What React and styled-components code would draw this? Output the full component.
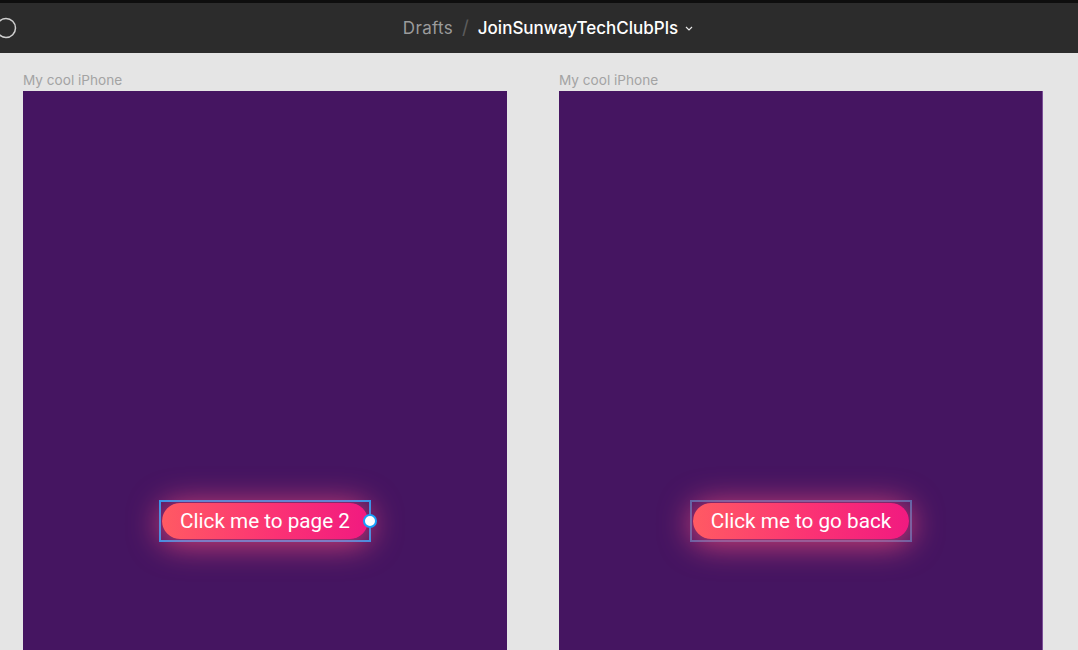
import React from "react";
import styled, { createGlobalStyle } from "styled-components";

const Global = createGlobalStyle`
  html, body { margin: 0; padding: 0; background: #e5e5e5; overflow: hidden; }
  body { font-family: Inter, "Noto Sans", sans-serif; }
  #root { height: 650px; }
`;

const Page = styled.div`
  height: 650px;
  display: flex;
  flex-direction: column;
  overflow: hidden;
`;

const TopStrip = styled.div`
  height: 3px;
  background: #0e0e0e;
  flex: none;
`;

const Toolbar = styled.header`
  height: 50px;
  flex: none;
  background: #2c2c2c;
  display: grid;
  grid-template-columns: 1fr auto 1fr;
  align-items: center;
`;

const ToolLeft = styled.div`
  display: flex;
  align-items: center;
  margin-left: -5px;
`;

const Title = styled.div`
  display: flex;
  align-items: center;
  font-size: 17px;
  padding-left: 18px;
  padding-bottom: 1px;
`;

const Crumb = styled.span`
  color: ${(p) => (p.$active ? "#ffffff" : "#9b9b9b")};
  font-weight: ${(p) => (p.$active ? 500 : 400)};
  letter-spacing: ${(p) => (p.$active ? "0" : "0.3px")};
`;

const Slash = styled.span`
  color: #5c5c5c;
  margin: 0 9px 0 9px;
  font-size: 19px;
`;

const Chevron = styled.svg`
  margin-left: 7px;
  margin-top: 2px;
`;

const Canvas = styled.main`
  flex: 1;
  display: flex;
  gap: 52px;
  padding: 19px 0 0 23px;
  overflow: hidden;
`;

const FrameColumn = styled.section`
  display: flex;
  flex-direction: column;
  flex: none;
`;

const FrameLabel = styled.div`
  font-size: 13.6px;
  line-height: 16px;
  color: #a3a3a3;
  margin-bottom: 3px;
  font-family: Inter, "Noto Sans", sans-serif;
`;

const Frame = styled.div`
  width: 484px;
  height: 640px;
  background: #451561;
  display: flex;
  flex-direction: column;
  align-items: center;
  padding-top: 409px;
  box-sizing: border-box;
  ${(p) => p.$hovered && `box-shadow: inset -1px 0 0 #7b4f97;`}
`;

const Selection = styled.div`
  position: relative;
  padding: 1px;
  border: 2px solid ${(p) => (p.$hover ? "#4a68ad" : "#18a0fb")};
  display: inline-flex;
`;

const Handle = styled.span`
  position: absolute;
  right: -8px;
  top: 50%;
  width: 10px;
  height: 10px;
  margin-top: -7px;
  border-radius: 50%;
  background: #ffffff;
  border: 2px solid #18a0fb;
`;

const PillButton = styled.button`
  height: 36px;
  padding: 0 ${(p) => p.$pad}px;
  border: none;
  border-radius: 18px;
  background: linear-gradient(90deg, #ff5a63 0%, #fb3274 55%, #f11a80 100%);
  color: #ffffff;
  font-family: Roboto, "Noto Sans", sans-serif;
  font-size: 20.7px;
  font-weight: 400;
  box-shadow: 0 3px 30px 4px rgba(255, 80, 125, 0.7);
  cursor: pointer;
  white-space: nowrap;
`;

export default function App() {
  return (
    <Page>
      <Global />
      <TopStrip />
      <Toolbar>
        <ToolLeft>
          <svg width="22" height="22" viewBox="0 0 22 22">
            <circle cx="11" cy="11" r="9.5" fill="none" stroke="#cfcfcf" strokeWidth="1.5" />
          </svg>
        </ToolLeft>
        <Title>
          <Crumb>Drafts</Crumb>
          <Slash>/</Slash>
          <Crumb $active>JoinSunwayTechClubPls</Crumb>
          <Chevron width="8" height="5" viewBox="0 0 8 5">
            <path d="M1 1l3 3 3-3" fill="none" stroke="#e6e6e6" strokeWidth="1.2" />
          </Chevron>
        </Title>
        <div />
      </Toolbar>
      <Canvas>
        <FrameColumn>
          <FrameLabel>My cool iPhone</FrameLabel>
          <Frame>
            <Selection>
              <PillButton $pad={18}>Click me to page 2</PillButton>
              <Handle />
            </Selection>
          </Frame>
        </FrameColumn>
        <FrameColumn>
          <FrameLabel>My cool iPhone</FrameLabel>
          <Frame $hovered>
            <Selection $hover>
              <PillButton $pad={18}>Click me to go back</PillButton>
            </Selection>
          </Frame>
        </FrameColumn>
      </Canvas>
    </Page>
  );
}
